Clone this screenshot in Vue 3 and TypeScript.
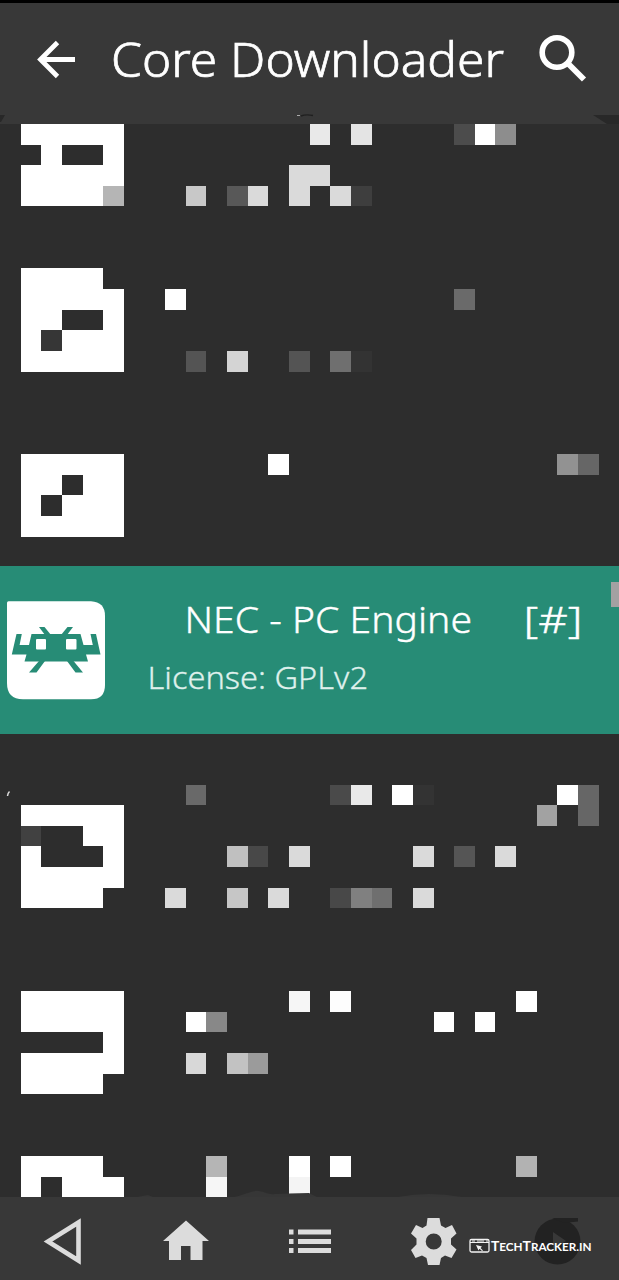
<script setup lang="ts">
interface Cell {
  x: number
  y: number
  w: number
  h: number
  fill: string
}

// [row, first column, number of columns, colour]
type Run = [number, number, number, string]

const CELL = 1280 / 62

const upperRuns: Run[] = [
  [6, 1, 5, '#fff'], [6, 15, 1, '#e9e9e9'], [6, 17, 1, '#e4e4e4'], [6, 22, 1, '#4c4c4c'], [6, 23, 1, '#fff'], [6, 24, 1, '#8d8d8d'],
  [7, 2, 1, '#fff'], [7, 5, 1, '#fff'],
  [8, 1, 5, '#fff'], [8, 14, 2, '#dadada'],
  [9, 1, 4, '#fff'], [9, 5, 1, '#b5b5b5'], [9, 9, 1, '#c8c8c8'], [9, 11, 1, '#585858'], [9, 12, 1, '#dadada'], [9, 14, 1, '#dadada'], [9, 16, 1, '#dadada'], [9, 17, 1, '#3e3e3e'],
  [13, 1, 4, '#fff'],
  [14, 1, 5, '#fff'], [14, 8, 1, '#fff'], [14, 22, 1, '#6a6a6a'],
  [15, 1, 2, '#fff'], [15, 5, 1, '#fff'],
  [16, 1, 1, '#fff'], [16, 2, 1, '#363636'], [16, 3, 3, '#fff'],
  [17, 1, 5, '#fff'], [17, 9, 1, '#545454'], [17, 11, 1, '#d4d4d4'], [17, 14, 1, '#545454'], [17, 16, 1, '#6f6f6f'], [17, 17, 1, '#333'],
  [22, 1, 5, '#fff'], [22, 13, 1, '#fff'], [22, 27, 1, '#929292'], [22, 28, 1, '#666'],
  [23, 1, 2, '#fff'], [23, 4, 2, '#fff'],
  [24, 1, 1, '#fff'], [24, 3, 3, '#fff'],
  [25, 1, 5, '#fff'],
]

const lowerRuns: Run[] = [
  [38, 9, 1, '#696969'], [38, 16, 1, '#4a4a4a'], [38, 17, 1, '#e9e9e9'], [38, 19, 1, '#fff'], [38, 20, 1, '#333'], [38, 27, 1, '#fff'], [38, 28, 1, '#666'],
  [39, 1, 5, '#fff'], [39, 26, 1, '#a2a2a2'], [39, 28, 1, '#666'],
  [40, 1, 1, '#414141'], [40, 4, 2, '#fff'],
  [41, 1, 1, '#fff'], [41, 5, 1, '#fff'], [41, 11, 1, '#c0c0c0'], [41, 12, 1, '#484848'], [41, 14, 1, '#dadada'], [41, 20, 1, '#dadada'], [41, 22, 1, '#555'], [41, 24, 1, '#dadada'],
  [42, 1, 5, '#fff'],
  [43, 1, 4, '#fff'], [43, 8, 1, '#dadada'], [43, 11, 1, '#c6c6c6'], [43, 13, 1, '#dadada'], [43, 16, 1, '#484848'], [43, 17, 1, '#808080'], [43, 18, 1, '#6f6f6f'], [43, 20, 1, '#dadada'],
  [48, 1, 5, '#fff'], [48, 14, 1, '#f6f6f6'], [48, 16, 1, '#fdfdfd'], [48, 25, 1, '#fff'],
  [49, 1, 5, '#fff'], [49, 9, 1, '#fff'], [49, 10, 1, '#888'], [49, 21, 1, '#fff'], [49, 23, 1, '#fff'],
  [50, 5, 1, '#fff'],
  [51, 1, 5, '#fff'], [51, 9, 1, '#d8d8d8'], [51, 11, 1, '#c2c2c2'], [51, 12, 1, '#9b9b9b'],
  [52, 1, 4, '#fff'],
  [56, 1, 4, '#fff'], [56, 10, 1, '#b5b5b5'], [56, 14, 1, '#fff'], [56, 16, 1, '#fff'], [56, 25, 1, '#b2b2b2'],
  [57, 1, 1, '#fff'], [57, 3, 3, '#fff'], [57, 10, 1, '#f6f6f6'], [57, 14, 1, '#f4f4f4'],
]

function toCells(runs: Run[]): Cell[] {
  return runs.map(([row, col, span, fill]) => {
    const x = Math.round(col * CELL)
    const y = Math.round(row * CELL)
    return {
      x,
      y,
      w: Math.round((col + span) * CELL) - x,
      h: Math.round((row + 1) * CELL) - y,
      fill,
    }
  })
}

const upper = toCells(upperRuns)
const lower = toCells(lowerRuns)
</script>

<template>
  <main class="screen">
    <header class="bar">
      <svg class="art" width="619" height="121" viewBox="0 3 619 121">
        <path d="M0 115H5L1 122H0ZM593 115H619V124H607Z" fill="#282828" />
        <path d="M301 116Q306 114 313 115.5" fill="none" stroke="#202020" stroke-width="1.4" />
        <path d="M297 115.5H300" stroke="#aaa" stroke-width="1" />
        <path d="M57.5 42.5L40.5 59.5L57.5 76.500M41 59.5H75" fill="none" stroke="#fff" stroke-width="4.800" />
        <text class="title" x="111" y="77" textLength="393" lengthAdjust="spacingAndGlyphs">Core Downloader</text>
        <circle cx="557" cy="52.500" r="14.800" fill="none" stroke="#fff" stroke-width="5.600" />
        <path d="M567 62.500L584 79.500" stroke="#fff" stroke-width="5.800" />
      </svg>
    </header>

    <section class="list">
      <svg class="art" width="619" height="442" viewBox="0 124 619 442" shape-rendering="crispEdges">
        <rect v-for="(c, i) in upper" :key="i" :x="c.x" :y="c.y" :width="c.w" :height="c.h" :fill="c.fill" />
      </svg>
    </section>

    <section class="selected">
      <svg class="art" width="619" height="168" viewBox="0 566 619 168">
        <path d="M8.500 601.300H91Q105 602 105 616V685Q105 699.300 91 699.300H23Q7 699.300 7 683V602.800Q7 601.300 8.500 601.300Z" fill="#fff" />
        <g fill="#278c76">
          <path d="M16.500 634H21.800L19.600 645H29L31.500 634H80.500L83.500 645H92.800L90.500 634H96L100.500 654.500H86L88 661.500H24.500L26.500 654.500H11.800Z" />
          <path d="M39 627H44.500L51 635H45ZM67.500 627H73L67 635H61ZM39 661H45L36.500 672.500H29ZM67 661H73.500L83 672.500H75.500Z" />
        </g>
        <rect x="36" y="639" width="10" height="10.500" rx="1" fill="#fff" />
        <rect x="66" y="639" width="10.500" height="10.500" rx="1" fill="#fff" />
        <text class="name" x="184.500" y="633.300" textLength="287.500" lengthAdjust="spacingAndGlyphs">NEC - PC Engine</text>
        <text class="name" x="523.500" y="633.300" textLength="59" lengthAdjust="spacingAndGlyphs">[#]</text>
        <text class="license" x="147.500" y="688.600" textLength="220.500" lengthAdjust="spacingAndGlyphs">License: GPLv2</text>
        <rect x="611" y="582" width="8" height="25" fill="#a3a1a2" />
      </svg>
    </section>

    <section class="list">
      <svg class="art" width="619" height="463" viewBox="0 734 619 463">
        <path d="M9.500 791.500Q7.800 793 7.500 796" fill="none" stroke="#ddd" stroke-width="1.500" />
        <g shape-rendering="crispEdges">
          <rect v-for="(c, i) in lower" :key="i" :x="c.x" :y="c.y" :width="c.w" :height="c.h" :fill="c.fill" />
        </g>
        <path d="M137 1197L148 1195L153 1197ZM234 1197C246 1194 253 1190 259 1191C266 1192 269 1195 275 1194L289 1193.500L309 1193L317 1197ZM398 1197Q428 1191 462 1197Z" fill="#363636" />
      </svg>
    </section>

    <footer class="nav">
      <svg class="art" width="619" height="83" viewBox="0 1197 619 83">
        <path d="M78.500 1222.500V1260.500L48 1241.500Z" fill="none" stroke="#dcdcdc" stroke-width="4.600" />
        <path d="M186 1220.500L209 1241H202.500V1260H190.500V1246H181V1260H169V1241H163Z" fill="#dcdcdc" />
        <path d="M289 1232H293.500M289 1241.500H293.500M289 1250.500H293.500M298 1232H331M298 1241.500H331M298 1250.500H331" stroke="#dcdcdc" stroke-width="5" />
        <path
          d="M427.500 1218H439.500L441 1225.500L445.500 1228L452 1225L456.500 1233.500L451 1238.500V1244.500L456.500 1249.500L451.500 1258L445 1255.500L441 1258L439.500 1265H428L426.500 1258L422 1255.500L415.500 1258L411 1250L416.500 1244.500V1238.500L411 1233.500L416 1225L422.500 1228L426.500 1225.500ZM433.700 1233.500A8 8 0 1 0 433.700 1249.500A8 8 0 1 0 433.700 1233.500Z"
          fill="#dcdcdc" fill-rule="evenodd"
        />
        <circle cx="557.500" cy="1241.500" r="23" fill="#222" />
        <path d="M552 1218H578V1221.500L564 1223Z" fill="#222" />
        <path d="M553 1232L566 1241L553 1249Z" fill="#383838" />
        <rect x="470" y="1239.500" width="19" height="12.500" rx="1.500" fill="#333" stroke="#f4f4f4" stroke-width="1.300" />
        <path d="M470 1242.500H489" stroke="#f4f4f4" stroke-width="1" />
        <path d="M472 1241H475M477 1241H484M486 1241H488" stroke="#eee" stroke-width="1" />
        <path d="M476 1245L482 1246.500L480.500 1248L483 1250.500L482 1251L479.500 1248.800L478.500 1250.500Z" fill="#f4f4f4" />
        <text class="mark" x="491" y="1251" textLength="100.500" lengthAdjust="spacingAndGlyphs">T<tspan class="small">ECH</tspan>T<tspan class="small">RACKER.IN</tspan></text>
      </svg>
    </footer>
  </main>
</template>

<style scoped>
.screen {
  display: flex;
  flex-direction: column;
  width: 619px;
  height: 1280px;
  overflow: hidden;
  background: #2d2d2d;
  font-family: "Noto Sans", "Open Sans", sans-serif;
}

.bar {
  height: 121px;
  border-top: 3px solid #000;
  background: #383838;
}

.list {
  background: #2d2d2d;
}

.selected {
  background: #278c76;
}

.nav {
  background: #383838;
}

.art {
  display: block;
}

.title {
  font-size: 48.5px;
  font-weight: 300;
  fill: #fff;
  stroke: #fff;
  stroke-width: 0.7px;
}

.name {
  font-size: 37.5px;
  font-weight: 300;
  fill: #fff;
  stroke: #fff;
  stroke-width: 0.4px;
}

.license {
  font-size: 30.5px;
  font-weight: 300;
  fill: #dff0ec;
  stroke: #dff0ec;
  stroke-width: 0.3px;
}

.mark {
  font-family: Lato, sans-serif;
  font-size: 12.5px;
  font-weight: 700;
  fill: #fff;
}

.small {
  font-size: 10.5px;
}
</style>

<style>
body {
  background: #2d2d2d;
}
</style>
